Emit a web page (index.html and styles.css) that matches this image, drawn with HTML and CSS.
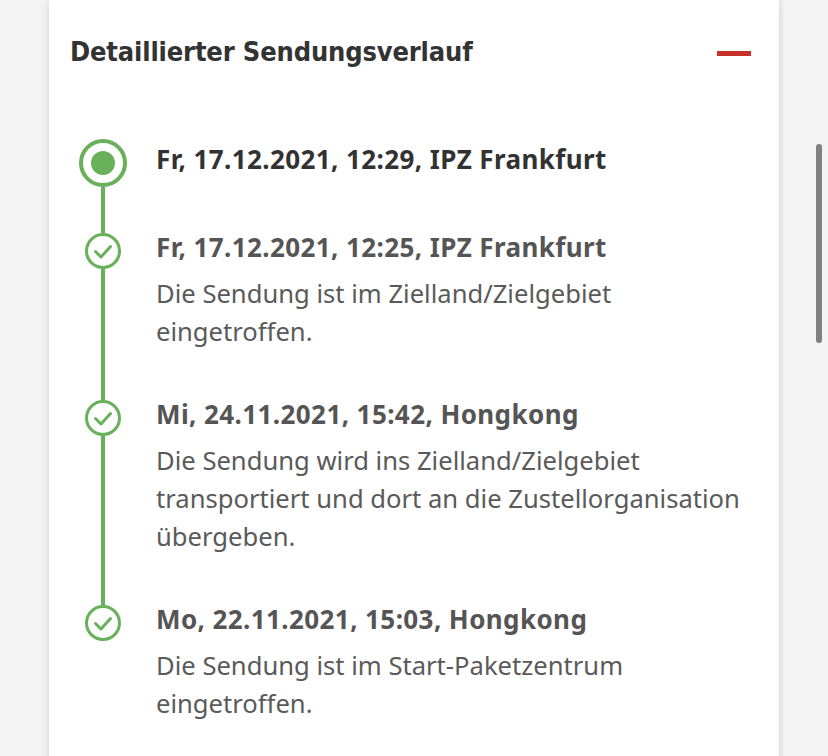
FILE: index.html
```html
<!DOCTYPE html>
<html lang="de">
<head>
<meta charset="utf-8">
<title>Detaillierter Sendungsverlauf</title>
<link rel="stylesheet" href="styles.css">
</head>
<body>
<main class="card">
  <div class="card-head">
    <h2 class="title">Detaillierter Sendungsverlauf</h2>
    <span class="collapse" aria-label="Zuklappen"></span>
  </div>
  <ol class="timeline">
    <li class="event current">
      <div class="rail">
        <svg class="marker big" viewBox="0 0 48 48" width="48" height="48"><circle cx="24" cy="24" r="22" fill="none" stroke="#68b15a" stroke-width="4"/><circle cx="24" cy="24" r="12" fill="#68b15a"/></svg>
        <span class="line"></span>
      </div>
      <div class="body">
        <p class="head">Fr, 17.12.2021, 12:29, IPZ Frankfurt</p>
      </div>
    </li>
    <li class="event">
      <div class="rail">
        <svg class="marker" viewBox="0 0 36 36" width="36" height="36"><circle cx="18" cy="18" r="16.5" fill="none" stroke="#68b15a" stroke-width="3"/><path d="M10.5 18.5 L16 24 L25.5 13.5" fill="none" stroke="#68b15a" stroke-width="3" stroke-linecap="round" stroke-linejoin="round"/></svg>
        <span class="line"></span>
      </div>
      <div class="body">
        <p class="head">Fr, 17.12.2021, 12:25, IPZ Frankfurt</p>
        <p class="desc">Die Sendung ist im Zielland/Zielgebiet eingetroffen.</p>
      </div>
    </li>
    <li class="event">
      <div class="rail">
        <svg class="marker" viewBox="0 0 36 36" width="36" height="36"><circle cx="18" cy="18" r="16.5" fill="none" stroke="#68b15a" stroke-width="3"/><path d="M10.5 18.5 L16 24 L25.5 13.5" fill="none" stroke="#68b15a" stroke-width="3" stroke-linecap="round" stroke-linejoin="round"/></svg>
        <span class="line"></span>
      </div>
      <div class="body">
        <p class="head">Mi, 24.11.2021, 15:42, Hongkong</p>
        <p class="desc">Die Sendung wird ins Zielland/Zielgebiet transportiert und dort an die Zustellorganisation übergeben.</p>
      </div>
    </li>
    <li class="event last">
      <div class="rail">
        <svg class="marker" viewBox="0 0 36 36" width="36" height="36"><circle cx="18" cy="18" r="16.5" fill="none" stroke="#68b15a" stroke-width="3"/><path d="M10.5 18.5 L16 24 L25.5 13.5" fill="none" stroke="#68b15a" stroke-width="3" stroke-linecap="round" stroke-linejoin="round"/></svg>
      </div>
      <div class="body">
        <p class="head">Mo, 22.11.2021, 15:03, Hongkong</p>
        <p class="desc">Die Sendung ist im Start-Paketzentrum eingetroffen.</p>
      </div>
    </li>
  </ol>
</main>
<div class="scrollbar"></div>
</body>
</html>
```
FILE: styles.css
```css
html, body {
  margin: 0;
  padding: 0;
  background: #f3f3f3;
  height: 100%;
  overflow: hidden;
}

body {
  font-family: "Noto Sans", "Open Sans", sans-serif;
  color: #555;
}

.card {
  margin-left: 49px;
  width: 730px;
  min-height: 800px;
  background: #fff;
  box-shadow: 0 0 8px rgba(0, 0, 0, 0.14);
  padding: 36px 28px 0 21px;
  box-sizing: border-box;
}

.card-head {
  display: flex;
  justify-content: space-between;
  align-items: center;
}

.title {
  margin: 0;
  font-family: "DejaVu Sans Condensed", "DejaVu Sans", sans-serif;
  font-stretch: condensed;
  font-weight: bold;
  font-size: 27px;
  line-height: 32px;
  color: #333;
  letter-spacing: -0.15px;
}

.collapse {
  width: 34px;
  height: 5px;
  background: #c8302b;
  margin-top: 3px;
}

.timeline {
  list-style: none;
  margin: 71px 0 0;
  padding: 0;
}

.event {
  display: grid;
  grid-template-columns: 66px 1fr;
  column-gap: 20px;
}

.rail {
  display: flex;
  flex-direction: column;
  align-items: center;
}

.marker {
  display: block;
  flex: none;
}

.line {
  flex: 1;
  width: 4px;
  background: #68b15a;
}

.body {
  padding-bottom: 49px;
}

.current .body {
  padding-bottom: 56px;
}

.head {
  margin: -4px 0 0;
  font-weight: bold;
  font-size: 26px;
  line-height: 36px;
  letter-spacing: 0.4px;
  color: #555;
}

.current .head {
  margin-top: 2px;
  color: #323232;
}

.desc {
  margin: 10px 0 0;
  font-size: 25.6px;
  line-height: 38px;
  color: #5a5a5a;
}

.scrollbar {
  position: fixed;
  left: 816px;
  top: 144px;
  width: 6px;
  height: 199px;
  border-radius: 3px;
  background: #808080;
}
```
